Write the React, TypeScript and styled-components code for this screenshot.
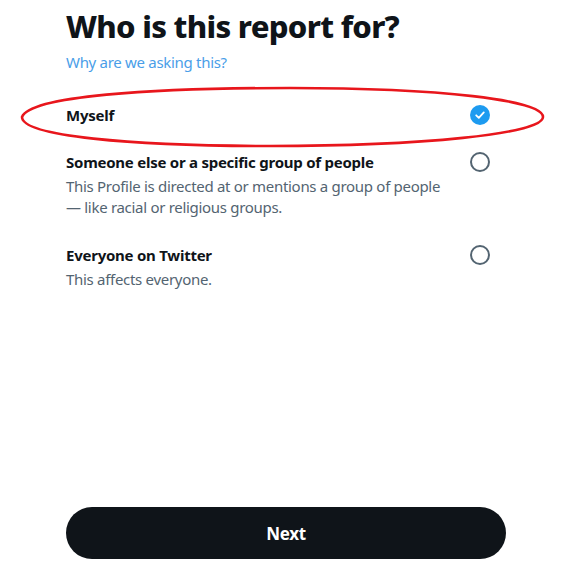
import React, { useState } from "react";
import styled, { createGlobalStyle } from "styled-components";

const Global = createGlobalStyle`
  html, body { margin: 0; padding: 0; background: #ffffff; }
  body { font-family: "Noto Sans", "Open Sans", Arial, sans-serif; color: #0f1419; }
  * { box-sizing: border-box; }
`;

const Page = styled.div`
  position: relative;
  width: 574px;
  height: 576px;
  display: flex;
  flex-direction: column;
  padding: 0 68px 17px 66px;
`;

const Title = styled.h1`
  margin: 0;
  padding-top: 8px;
  font-size: 31px;
  line-height: 36px;
  font-weight: 800;
  letter-spacing: -0.7px;
  color: #0f1419;
`;

const Link = styled.a`
  display: block;
  margin-top: 8px;
  font-size: 15px;
  line-height: 20px;
  letter-spacing: -0.3px;
  color: #4a9ee8;
  text-decoration: none;
`;

const Options = styled.div`
  margin-top: 19px;
  display: flex;
  flex-direction: column;
`;

const Row = styled.label`
  display: flex;
  align-items: flex-start;
  justify-content: space-between;
  padding: 14px 16px 13px 0;
  cursor: pointer;
`;

const Texts = styled.div`
  display: flex;
  flex-direction: column;
  max-width: 392px;
`;

const OptionTitle = styled.span`
  font-size: 15px;
  line-height: 20px;
  font-weight: 700;
  letter-spacing: -0.25px;
  color: #0f1419;
`;

const OptionDesc = styled.span`
  margin-top: 4px;
  font-size: 15px;
  line-height: 21px;
  letter-spacing: -0.3px;
  color: #536471;
`;

const Radio = styled.span<{ $checked: boolean }>`
  flex: none;
  width: 20px;
  height: 20px;
  border-radius: 50%;
  display: flex;
  align-items: center;
  justify-content: center;
  background: ${(p) => (p.$checked ? "#1d9bf0" : "transparent")};
  border: ${(p) => (p.$checked ? "none" : "2px solid #536471")};
`;

const Spacer = styled.div`
  flex: 1;
`;

const NextButton = styled.button`
  width: 440px;
  height: 52px;
  border: none;
  border-radius: 26px;
  background: #0f1419;
  color: #ffffff;
  font-family: inherit;
  font-size: 17px;
  font-weight: 700;
  letter-spacing: -0.3px;
  cursor: pointer;
`;

const Annotation = styled.svg`
  position: absolute;
  left: 0;
  top: 0;
  pointer-events: none;
`;

const options = [
  { id: "me", title: "Myself", desc: "" },
  {
    id: "other",
    title: "Someone else or a specific group of people",
    desc: "This Profile is directed at or mentions a group of people — like racial or religious groups.",
  },
  { id: "all", title: "Everyone on Twitter", desc: "This affects everyone." },
];

export default function App() {
  const [sel, setSel] = useState("me");
  return (
    <>
      <Global />
      <Page>
        <Title>Who is this report for?</Title>
        <Link href="#">Why are we asking this?</Link>
        <Options>
          {options.map((o) => (
            <Row key={o.id} onClick={() => setSel(o.id)}>
              <Texts>
                <OptionTitle>{o.title}</OptionTitle>
                {o.desc && <OptionDesc>{o.desc}</OptionDesc>}
              </Texts>
              <Radio $checked={sel === o.id}>
                {sel === o.id && (
                  <svg width="12" height="12" viewBox="0 0 12 12">
                    <path d="M2.2 6.3 L4.8 8.8 L9.8 3.4" fill="none" stroke="#fff" strokeWidth="1.8" strokeLinecap="round" strokeLinejoin="round" />
                  </svg>
                )}
              </Radio>
            </Row>
          ))}
        </Options>
        <Spacer />
        <NextButton>Next</NextButton>
        <Annotation width="574" height="576" viewBox="0 0 574 576">
          <path
            d="M22 117 C 30 96, 150 88, 290 88 C 440 88, 543 100, 543 117 C 543 134, 420 146, 270 146 C 130 146, 22 136, 22 117 Z"
            fill="none"
            stroke="#e8161c"
            strokeWidth="2.6"
          />
        </Annotation>
      </Page>
    </>
  );
}
